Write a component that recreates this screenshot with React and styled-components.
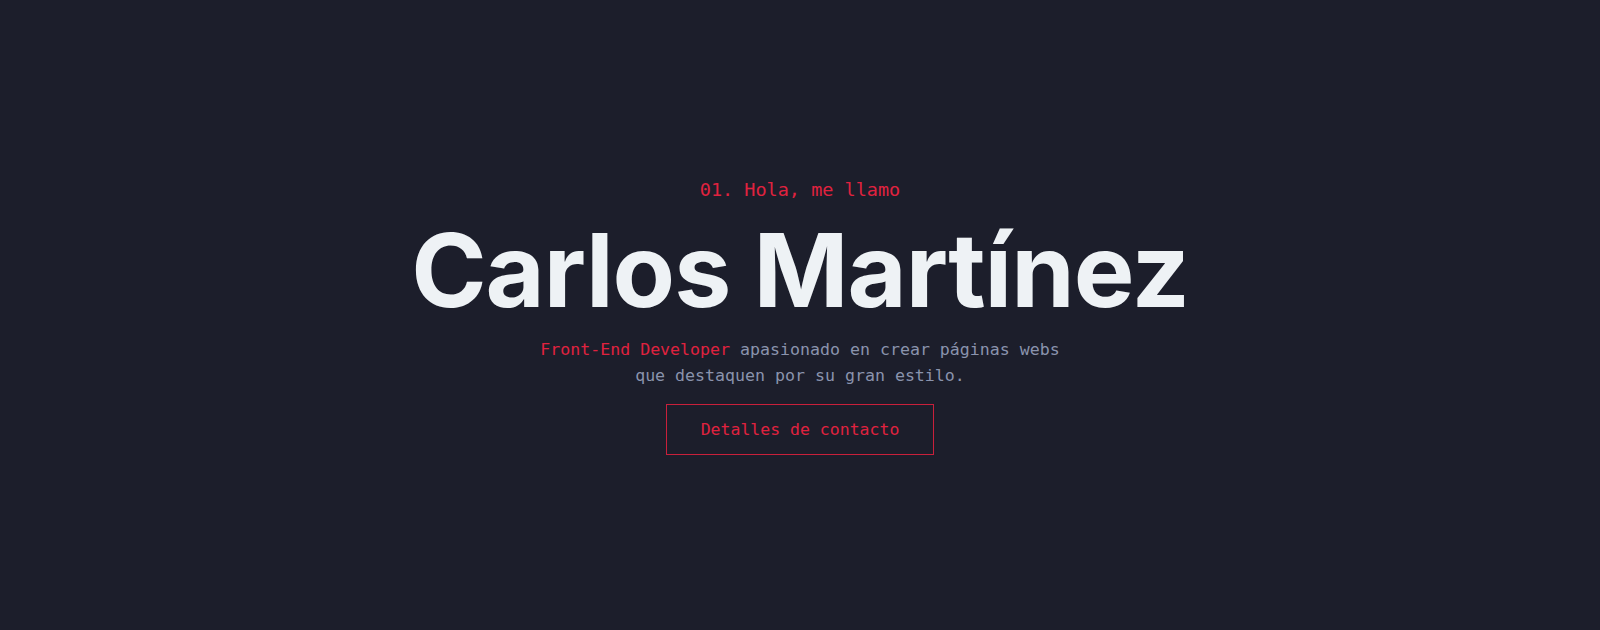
import styled, { createGlobalStyle } from "styled-components";

const GlobalStyle = createGlobalStyle`
  * {
    box-sizing: border-box;
  }
  body {
    margin: 0;
    background-color: #1c1e2b;
  }
`;

const App = () => {
  return (
    <>
      <GlobalStyle />
      <StyledHero>
        <StyledIntro>01. Hola, me llamo</StyledIntro>
        <StyledName>Carlos Martínez</StyledName>
        <StyledDescription>
          <StyledHighlight>Front-End Developer</StyledHighlight> apasionado en
          crear páginas webs
          <br />
          que destaquen por su gran estilo.
        </StyledDescription>
        <StyledContactButton>Detalles de contacto</StyledContactButton>
      </StyledHero>
    </>
  );
};

const StyledHero = styled.section`
  height: 100vh;
  display: flex;
  flex-direction: column;
  align-items: center;
  justify-content: center;
  background-color: #1c1e2b;
  text-align: center;
`;

const StyledIntro = styled.p`
  margin: 0;
  font-family: "DejaVu Sans Mono", "Liberation Mono", monospace;
  font-size: 18.5px;
  line-height: 28px;
  color: #e0223f;
`;

const StyledName = styled.h1`
  margin: 10px 0 0;
  font-family: Inter, "Noto Sans", sans-serif;
  font-size: 102px;
  font-weight: 700;
  line-height: 112px;
  letter-spacing: -1px;
  color: #eef2f5;
`;

const StyledDescription = styled.p`
  margin: 11px 0 0;
  font-family: "DejaVu Sans Mono", "Liberation Mono", monospace;
  font-size: 16.6px;
  line-height: 26px;
  color: #8a93ad;
`;

const StyledHighlight = styled.span`
  color: #e0223f;
`;

const StyledContactButton = styled.button`
  margin-top: 15px;
  width: 268px;
  height: 51px;
  background: transparent;
  border: 1px solid #c8203b;
  font-family: "DejaVu Sans Mono", "Liberation Mono", monospace;
  font-size: 16.5px;
  color: #e0223f;
  cursor: pointer;
`;

export default App;
